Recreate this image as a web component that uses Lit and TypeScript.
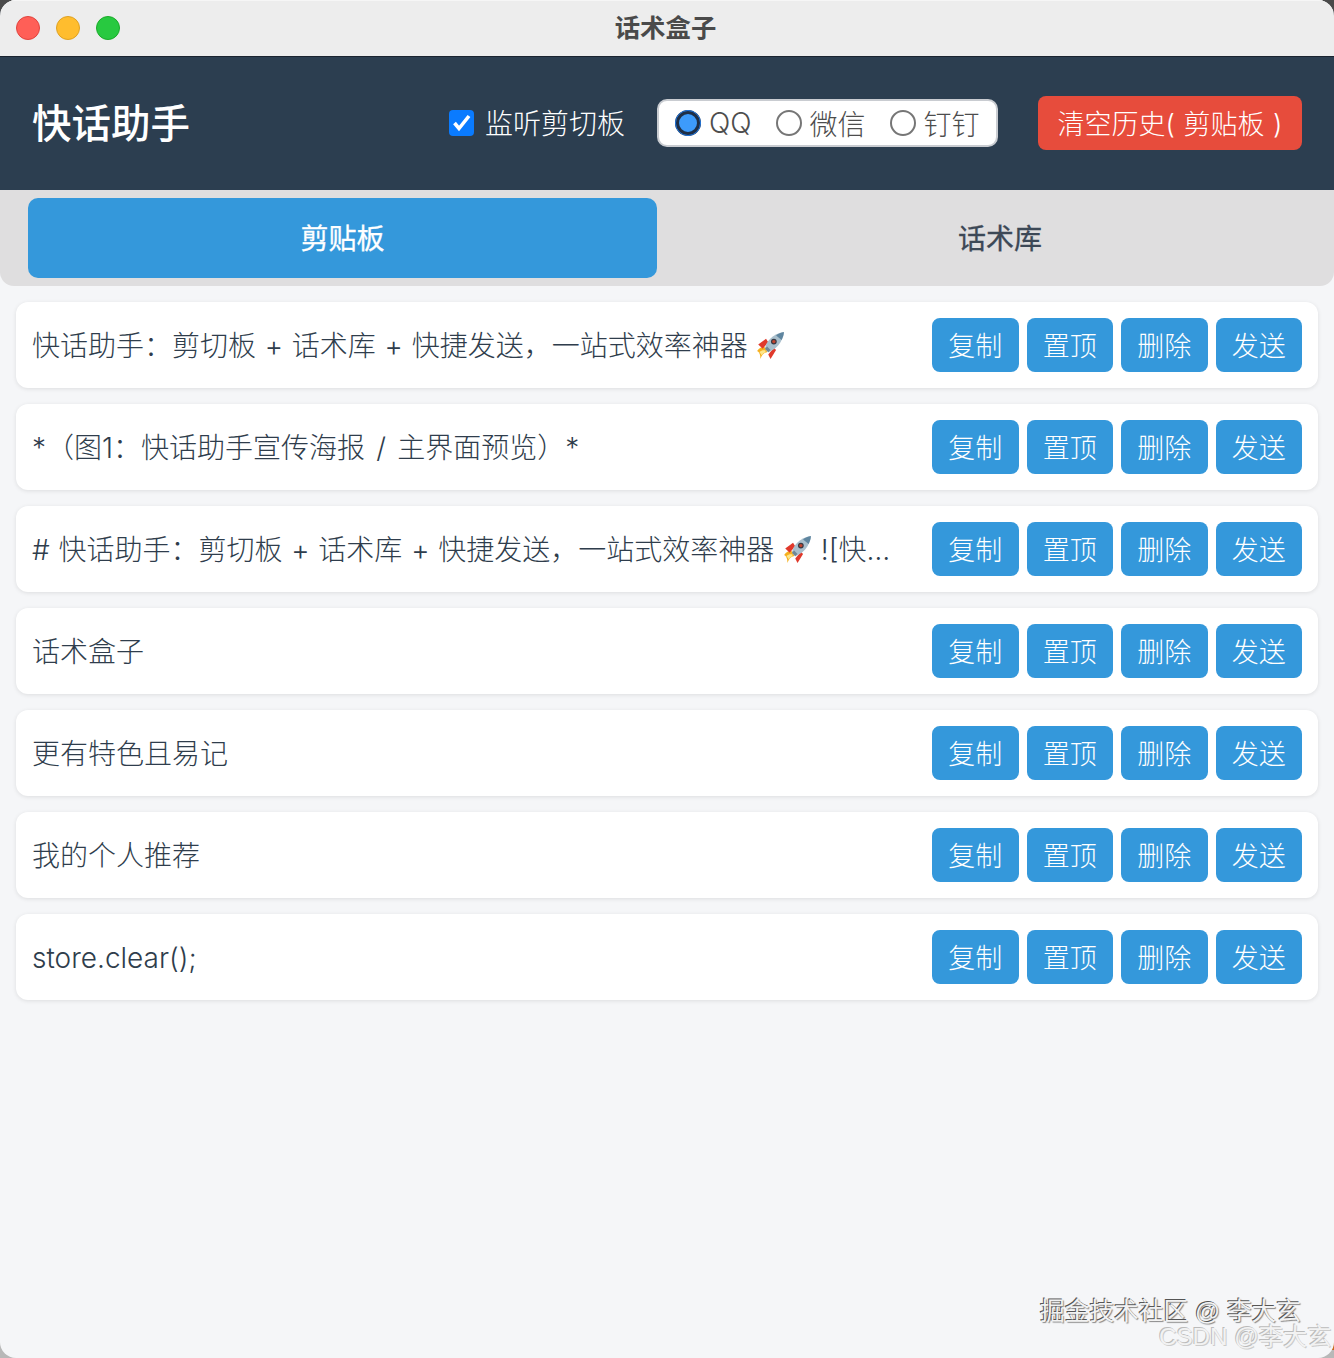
import { LitElement, html, css, svg } from "lit";
import { customElement } from "lit/decorators.js";

const rocket = svg`<svg class="rocket" viewBox="2 1 26 26" width="29" height="29" aria-hidden="true">
  <path d="M3 19 C6 15 9 15 11 16 L12 20 C10 20 8 21 6 26 C6 22 5 20 3 19Z" fill="#f6b01e"/>
  <path d="M5 20 C7 18 9 18 10.5 18.5 L10.5 20 C9 20.5 8 21.5 7 23 C7 22 6 21 5 20Z" fill="#fde68a"/>
  <path d="M4 13 L11 8 L13 11 L8 17Z" fill="#e0392b"/>
  <path d="M13 22 L18 16 L20 18 L15 26Z" fill="#e0392b"/>
  <path d="M10 17 C11 11 16 4 27 2 C26 12 19 18 13 20Z" fill="#a9bfcc"/>
  <path d="M27 2 C23 3 21 4 20 5 L25 9 C26 7 27 5 27 2Z" fill="#5f86a0"/>
  <path d="M10 17 L13 20 L15 18 L12 15Z" fill="#6f8796"/>
  <circle cx="18" cy="10.5" r="2.6" fill="#3a3a44"/>
  <circle cx="18" cy="10.5" r="1.5" fill="#c2452f"/>
</svg>`;

const slash = html`<span class="slash">/</span>`;

const rows = [
  { content: html`快话助手：剪切板 + 话术库 + 快捷发送，一站式效率神器 ${rocket}`, latin: false },
  { content: html`*（图1：快话助手宣传海报 ${slash} 主界面预览）*`, latin: false },
  { content: html`# 快话助手：剪切板 + 话术库 + 快捷发送，一站式效率神器 ${rocket} ![快话助`, latin: false },
  { content: html`话术盒子`, latin: false },
  { content: html`更有特色且易记`, latin: false },
  { content: html`我的个人推荐`, latin: false },
  { content: html`store.clear();`, latin: true },
];

@customElement("app-root")
export class AppRoot extends LitElement {
  static styles = css`
    :host {
      display: block;
      width: 1334px;
      height: 1358px;
      background:
        linear-gradient(#c8691f, #c8691f) right 1338px / 6px 12px no-repeat,
        linear-gradient(to bottom, #4a4a4a 50%, #b8b8b8 50%);
      font-family: Inter, "Noto Sans CJK SC", sans-serif;
      overflow: hidden;
    }
    .window {
      position: relative;
      height: 1358px;
      border-radius: 16px;
      overflow: hidden;
      background: #f5f6f8;
      display: flex;
      flex-direction: column;
    }
    .titlebar {
      position: relative;
      flex: none;
      height: 56px;
      box-sizing: border-box;
      background: #ededed;
      border-top: 1px solid #f6f6f6;
      display: flex;
      align-items: center;
      justify-content: center;
      box-shadow: 0 1px 0 #1a2430;
      z-index: 1;
    }
    .lights {
      position: absolute;
      left: 16px;
      top: 15px;
      display: flex;
      gap: 16px;
    }
    .light {
      width: 24px;
      height: 24px;
      box-sizing: border-box;
      border-radius: 50%;
    }
    .red { background: #ff5f57; border: 1px solid #e0443e; }
    .yellow { background: #ffbd2e; border: 1px solid #dea123; }
    .green { background: #28c940; border: 1px solid #1aab29; }
    .wintitle {
      font-size: 25.4px;
      font-weight: 700;
      color: #4a4a4a;
      padding: 0 3px 6px 0;
    }
    .header {
      flex: none;
      height: 134px;
      box-sizing: border-box;
      background: #2c3e50;
      display: flex;
      align-items: center;
      padding: 0 32px;
      color: #fff;
    }
    .brand {
      flex: 1;
      font-size: 39.5px;
      font-weight: 500;
      color: #fff;
      padding: 0 0 6px 0;
    }
    .listen {
      display: flex;
      align-items: center;
      gap: 11px;
      font-size: 28px;
      font-weight: 300;
      color: #fff;
      white-space: nowrap;
    }
    .listen-label {
      padding-bottom: 2px;
    }
    .check {
      width: 25px;
      height: 26px;
      border-radius: 4px;
      background: #0a7bff;
      display: block;
    }
    .check svg {
      display: block;
    }
    .platforms {
      margin-left: 32px;
      width: 341px;
      height: 48px;
      box-sizing: border-box;
      background: #fff;
      border: 2px solid #c9ccd1;
      border-radius: 10px;
      display: flex;
      align-items: center;
      padding-left: 16px;
      color: #4d4d4d;
      font-size: 28px;
      font-weight: 300;
      white-space: nowrap;
    }
    .radio {
      display: flex;
      align-items: center;
      gap: 8px;
      margin-right: 24px;
    }
    .dot {
      flex: none;
      width: 26px;
      height: 26px;
      box-sizing: border-box;
      border-radius: 50%;
      border: 2px solid #767676;
      background: #fff;
    }
    .dot.on {
      border: 4px solid #1f2f46;
      outline: 1.5px solid #1e78e6;
      outline-offset: -1px;
      background: #3d9bfb;
    }
    .clear {
      margin-left: 40px;
      width: 264px;
      height: 54px;
      box-sizing: border-box;
      padding-bottom: 2px;
      background: #e74c3c;
      border-radius: 8px;
      color: #fff;
      font-size: 27px;
      word-spacing: 1px;
      font-weight: 300;
      display: flex;
      align-items: center;
      justify-content: center;
      white-space: pre;
    }
    .tabs {
      flex: none;
      height: 96px;
      box-sizing: border-box;
      background: #dfdedf;
      padding: 8px 0 8px 28px;
      display: flex;
      gap: 9px;
      border-radius: 0 0 14px 14px;
    }
    .tab {
      display: flex;
      align-items: center;
      justify-content: center;
      box-sizing: border-box;
      padding-bottom: 2px;
      font-size: 28px;
      font-weight: 400;
      -webkit-text-stroke: 0.3px currentColor;
      color: #3c4856;
      flex: 1;
      border-radius: 10px;
    }
    .tab.active {
      flex: none;
      width: 629px;
      background: #3498db;
      color: #fff;
    }
    .list {
      padding: 16px 16px 0;
      display: flex;
      flex-direction: column;
      gap: 16px;
    }
    .row {
      height: 86px;
      box-sizing: border-box;
      background: #fff;
      border-radius: 12px;
      box-shadow: 0 1px 4px rgba(0, 0, 0, 0.1);
      display: flex;
      align-items: center;
      padding: 0 16px;
    }
    .text {
      flex: 1;
      min-width: 0;
      box-sizing: border-box;
      padding-bottom: 2px;
      font-size: 28px;
      font-weight: 300;
      word-spacing: 0.9px;
      color: #2f3d4c;
      white-space: nowrap;
      overflow: hidden;
      text-overflow: ellipsis;
      margin-right: 37px;
    }
    .text.latin {
      padding: 2px 0 0;
    }
    .slash {
      margin: 0 2.5px;
    }
    .rocket {
      vertical-align: -4px;
    }
    .actions {
      flex: none;
      display: flex;
      gap: 8px;
    }
    .btn {
      width: 86.5px;
      height: 54px;
      box-sizing: border-box;
      padding-bottom: 2px;
      background: #3498db;
      color: #fff;
      border-radius: 8px;
      font-size: 27px;
      font-weight: 300;
      display: flex;
      align-items: center;
      justify-content: center;
    }
    .mark {
      position: absolute;
      white-space: nowrap;
      font-family: "Liberation Sans", "Noto Sans CJK SC", sans-serif;
    }
    .mark1 {
      left: 1040px;
      top: 1291px;
      font-size: 24.7px;
      color: #f2f2f2;
      text-shadow: -1px -1px 0 #555, 1px 1px 1px #888;
    }
    .mark2 {
      left: 1159px;
      top: 1317px;
      font-size: 24.2px;
      color: #f2f2f2;
      text-shadow: -1px -1px 0 #bbb, 1px 1px 0 #ccc;
    }
  `;

  render() {
    return html`
      <div class="window">
        <div class="titlebar">
          <div class="lights">
            <span class="light red"></span>
            <span class="light yellow"></span>
            <span class="light green"></span>
          </div>
          <div class="wintitle">话术盒子</div>
        </div>
        <div class="header">
          <div class="brand">快话助手</div>
          <div class="listen">
            <span class="check">
              <svg width="25" height="26" viewBox="0 0 25 26" aria-hidden="true">
                <path d="M5.5 13 L10 18.5 L20 6" fill="none" stroke="#fff" stroke-width="3.6"/>
              </svg>
            </span>
            <span class="listen-label">监听剪切板</span>
          </div>
          <div class="platforms">
            <div class="radio"><span class="dot on"></span>QQ</div>
            <div class="radio"><span class="dot"></span>微信</div>
            <div class="radio"><span class="dot"></span>钉钉</div>
          </div>
          <div class="clear">清空历史( 剪贴板 )</div>
        </div>
        <div class="tabs">
          <div class="tab active">剪贴板</div>
          <div class="tab">话术库</div>
        </div>
        <div class="list">
          ${rows.map(
            (r) => html`
              <div class="row">
                <div class="text ${r.latin ? "latin" : ""}">${r.content}</div>
                <div class="actions">
                  <div class="btn">复制</div>
                  <div class="btn">置顶</div>
                  <div class="btn">删除</div>
                  <div class="btn">发送</div>
                </div>
              </div>
            `
          )}
        </div>
        <div class="mark mark1">掘金技术社区 @ 李大玄</div>
        <div class="mark mark2">CSDN @李大玄</div>
      </div>
    `;
  }
}
